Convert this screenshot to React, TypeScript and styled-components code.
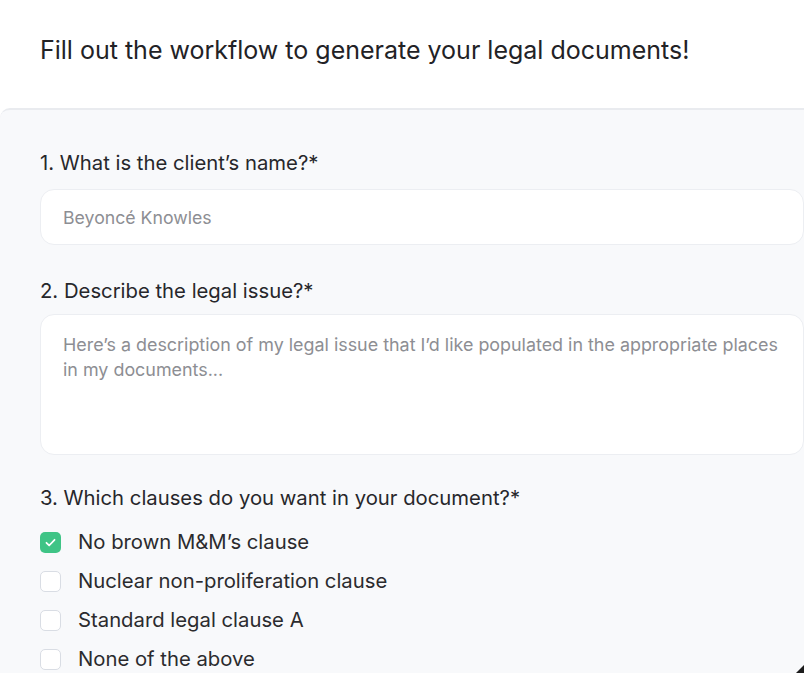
import React from 'react';
import styled, { createGlobalStyle } from 'styled-components';

const GlobalStyle = createGlobalStyle`
    html, body {
        margin: 0;
        padding: 0;
        background: #ffffff;
        overflow: hidden;
    }
    body {
        font-family: Inter, "Noto Sans", "Liberation Sans", sans-serif;
        color: #2b2b2e;
    }
`;

const Page = styled.div`
    width: 804px;
    height: 673px;
    overflow: hidden;
    position: relative;
    background: #ffffff;
`;

const Header = styled.header`
    height: 108px;
    display: flex;
    align-items: center;
    padding: 0 40px;
    box-sizing: border-box;
`;

const Title = styled.h1`
    margin: 0 0 8px;
    font-size: 25px;
    line-height: 30px;
    font-weight: 400;
    color: #222226;
`;

const Panel = styled.section`
    background: #f8f9fb;
    border-top: 2px solid #e9ebef;
    border-top-left-radius: 10px;
    padding: 41px 0 0 40px;
    min-height: 600px;
    display: flex;
    flex-direction: column;
`;

const Question = styled.div<{ space?: number }>`
    display: flex;
    flex-direction: column;
    margin-bottom: ${(p) => p.space ?? 32}px;
`;

const Label = styled.label<{ gap?: number }>`
    font-size: 20.3px;
    line-height: 24px;
    color: #27272b;
    margin-bottom: ${(p) => p.gap ?? 14}px;
`;

const TextInput = styled.input`
    box-sizing: border-box;
    width: 764px;
    height: 56px;
    border: 1px solid #eceef2;
    border-radius: 14px;
    background: #ffffff;
    padding: 0 22px;
    font-family: inherit;
    font-size: 17.7px;
    color: #2b2b2e;
    outline: none;

    &::placeholder {
        color: #8d8e93;
    }
`;

const TextArea = styled.textarea`
    box-sizing: border-box;
    width: 764px;
    height: 141px;
    border: 1px solid #eceef2;
    border-radius: 14px;
    background: #ffffff;
    padding: 17px 18px 17px 22px;
    font-family: inherit;
    font-size: 17.9px;
    line-height: 25px;
    resize: none;
    outline: none;

    &::placeholder {
        color: #8d8e93;
    }
`;

const Options = styled.div`
    display: flex;
    flex-direction: column;
    gap: 15px;
`;

const Option = styled.label`
    display: flex;
    align-items: center;
    gap: 17px;
    font-size: 20.3px;
    line-height: 24px;
    color: #2b2b2e;
`;

const Box = styled.span<{ checked?: boolean }>`
    box-sizing: border-box;
    width: 21px;
    height: 21px;
    border-radius: 5px;
    flex-shrink: 0;
    display: flex;
    align-items: center;
    justify-content: center;
    background: ${(p) => (p.checked ? '#3fc486' : '#ffffff')};
    border: ${(p) => (p.checked ? 'none' : '1.5px solid #d9dde4')};
`;

const Corner = styled.div`
    position: absolute;
    right: 0;
    bottom: 0;
    width: 0;
    height: 0;
    border-left: 8px solid transparent;
    border-bottom: 8px solid #1c1c1c;
`;

const clauses = [
    { text: 'No brown M&M\u2019s clause', checked: true },
    { text: 'Nuclear non-proliferation clause', checked: false },
    { text: 'Standard legal clause A', checked: false },
    { text: 'None of the above', checked: false },
];

const Check = () => (
    <svg width="13" height="13" viewBox="0 0 24 24" fill="none">
        <path d="M4.5 12.5l5 5L19.5 7" stroke="#fff" strokeWidth="3.2" strokeLinecap="round" strokeLinejoin="round" />
    </svg>
);

const App: React.FC = () => {
    return (
        <Page>
            <GlobalStyle />
            <Header>
                <Title>Fill out the workflow to generate your legal documents!</Title>
            </Header>
            <Panel>
                <Question space={34}>
                    <Label gap={14}>1. What is the client’s name?*</Label>
                    <TextInput placeholder="Beyoncé Knowles" />
                </Question>
                <Question space={31}>
                    <Label gap={11}>2. Describe the legal issue?*</Label>
                    <TextArea placeholder="Here’s a description of my legal issue that I’d like populated in the appropriate places in my documents..." />
                </Question>
                <Question>
                    <Label gap={20}>3. Which clauses do you want in your document?*</Label>
                    <Options>
                        {clauses.map((c) => (
                            <Option key={c.text}>
                                <Box checked={c.checked}>{c.checked && <Check />}</Box>
                                {c.text}
                            </Option>
                        ))}
                    </Options>
                </Question>
            </Panel>
            <Corner />
        </Page>
    );
};

export default App;
